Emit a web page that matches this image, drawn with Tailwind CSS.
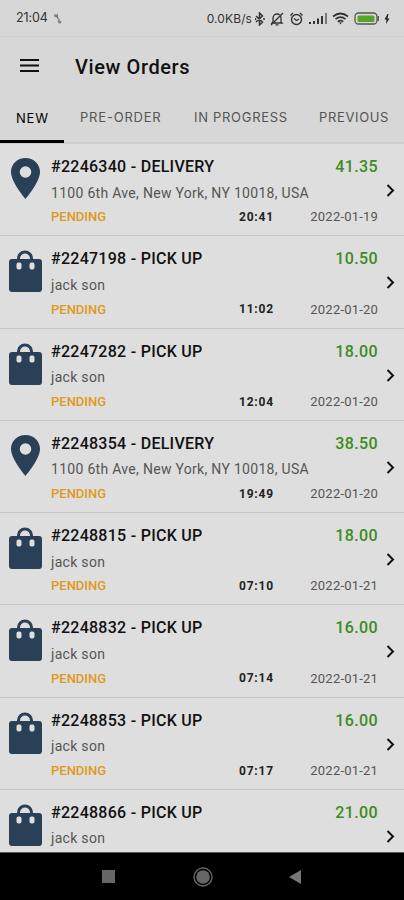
<!DOCTYPE html>
<html lang="en">
<head>
    <meta charset="UTF-8">
    <meta name="viewport" content="width=device-width, initial-scale=1.0">
    <title>View Orders</title>
    <script src="https://cdn.jsdelivr.net/npm/@tailwindcss/browser@4"></script>
</head>
<body class="h-[900px] overflow-hidden bg-[#dedede] flex flex-col font-['Roboto',sans-serif] text-black whitespace-nowrap">
    <!-- Status bar -->
    <div class="h-[37px] shrink-0 bg-[#d7d7d7] border-b border-[#cdcdcd] flex items-center pl-4 pr-[14px] pt-px text-[#333]">
        <span class="text-[12.5px] tracking-[-0.1px] font-['Inter',sans-serif]">21:04</span>
        <svg class="ml-[6px] w-2 h-3" viewBox="0 0 8 12" fill="none" stroke="#777" stroke-width="1.3"><path d="M1 4V2l2 2M3 1l1 5M5 6v4M4 8l2 2 1-2"/></svg>
        <span class="ml-auto text-[12px] tracking-[0.1px] font-['Inter',sans-serif]">0.0KB/s</span>
        <svg class="ml-[3px] w-[10px] h-[14px]" viewBox="0 0 10 14" fill="none" stroke="#333" stroke-width="1.5"><path d="M1 4l6.500 6L4.500 13V1l3 3L1 10M9 6v2M0.500 6v2"/></svg>
        <svg class="ml-[5px] w-[14px] h-[14px]" viewBox="0 0 14 14" fill="none" stroke="#333" stroke-width="1.3"><path d="M3 10V6a4 4 0 0 1 8 0v4l1 1H2zM5.500 12.800h3M13 1L1 13"/></svg>
        <svg class="ml-[5px] w-[15px] h-[14px]" viewBox="0 0 14 14" fill="none" stroke="#333" stroke-width="1.4"><circle cx="7" cy="7.500" r="5"/><path d="M1 3.500L3.500 1M13 3.500L10.500 1M4.500 6.500L7 8.500l2.500-1.500"/></svg>
        <svg class="ml-[5px] w-[19px] h-[13px]" viewBox="0 0 19 13" fill="#333"><path d="M0 10h2v2H0zM4 9h2v3H4zM8 6.500h2V12H8zM12 4h2v8h-2z"/><path d="M16 1h2v11h-2z" fill="#777"/></svg>
        <svg class="ml-[4px] w-[17px] h-[13px]" viewBox="0 0 17 13" fill="none" stroke="#333" stroke-width="1.700"><path d="M1 4.500Q8.500-1.500 16 4.500M3.500 7.200q5-4 10 0M5.800 9.700q2.700-2 5.400 0"/><path d="M7 10.500h3L8.500 12.500z" fill="#333" stroke="none"/></svg>
        <svg class="ml-[5px] w-[26px] h-[13px]" viewBox="0 0 26 13"><rect x="1" y="1" width="22" height="11" rx="3.500" fill="#d7d7d7" stroke="#555" stroke-width="1.300"/><rect x="3.500" y="3.500" width="17" height="6.500" rx="1.500" fill="#55a528"/><path d="M24.200 4v5" stroke="#555" stroke-width="1.500"/></svg>
        <svg class="ml-[4px] w-[6px] h-[10px]" viewBox="0 0 6 10" fill="#222"><path d="M3.500 0L0.500 5.500h2L2 10l3.500-5.500h-2L4.500 0z"/></svg>
    </div>

    <!-- App bar -->
    <div class="h-[57px] shrink-0 bg-[#d7d7d7] flex items-center pl-5">
        <svg class="w-[19px] h-[14px] shrink-0" viewBox="0 0 19 14" fill="#111"><path d="M0 0h19v2H0zM0 5.500h19v2H0zM0 11h19v2H0z"/></svg>
        <h1 class="ml-9 mt-[2px] text-[20px] font-medium tracking-[0.6px] text-[#111]">View Orders</h1>
    </div>

    <!-- Tabs -->
    <div class="h-[50px] shrink-0 bg-[#d7d7d7] border-b-2 border-[#cdcdcd] flex text-[13px] text-[#555] font-['Inter',sans-serif]">
        <div class="w-16 h-[49px] shrink-0 border-b-3 border-black flex items-center pt-[3px] pl-4 text-black"><span class="tracking-[0.8px]">NEW</span></div>
        <div class="pl-4 w-[130px] shrink-0 flex items-center"><span class="tracking-[0.8px]">PRE-ORDER</span></div>
        <div class="w-[125px] shrink-0 flex items-center"><span class="tracking-[0.7px]">IN PROGRESS</span></div>
        <div class="flex items-center"><span class="tracking-[0.65px]">PREVIOUS</span></div>
    </div>

    <!-- Order list -->
    <div id="orders" class="flex-1 min-h-0 overflow-hidden"></div>

    <!-- Navigation bar -->
    <div class="h-[48px] shrink-0 bg-black border-t border-[#555] flex items-center pl-[102px]">
        <div class="w-[13px] h-[13px] bg-[#666]"></div>
        <svg class="ml-[78px] w-5 h-5" viewBox="0 0 20 20" fill="none" stroke="#666"><circle cx="10" cy="10" r="9" stroke-width="1.400"/><circle cx="10" cy="10" r="6.800" fill="#666" stroke="none"/></svg>
        <svg class="ml-[76px] w-3 h-[14px]" viewBox="0 0 12 14" fill="#777"><path d="M12 0v14L0 7z"/></svg>
    </div>

    <script>
        const address = "1100 6th Ave, New York, NY 10018, USA";
        const orders = [
            { id: "2246340", type: "DELIVERY", name: address, total: "41.35", time: "20:41", date: "2022-01-19" },
            { id: "2247198", type: "PICK UP", name: "jack son", total: "10.50", time: "11:02", date: "2022-01-20" },
            { id: "2247282", type: "PICK UP", name: "jack son", total: "18.00", time: "12:04", date: "2022-01-20" },
            { id: "2248354", type: "DELIVERY", name: address, total: "38.50", time: "19:49", date: "2022-01-20" },
            { id: "2248815", type: "PICK UP", name: "jack son", total: "18.00", time: "07:10", date: "2022-01-21" },
            { id: "2248832", type: "PICK UP", name: "jack son", total: "16.00", time: "07:14", date: "2022-01-21" },
            { id: "2248853", type: "PICK UP", name: "jack son", total: "16.00", time: "07:17", date: "2022-01-21" },
            { id: "2248866", type: "PICK UP", name: "jack son", total: "21.00" }
        ];

        const pin = `<svg class="w-[34px] h-[43px] -mt-px" viewBox="0 0 34 43" fill="#2a4056"><path fill-rule="evenodd" d="M17.500 1C9.500 1 3 7 3 15c0 10 14.500 27 14.500 27S32 25 32 15C32 7 25.500 1 17.500 1zM17.500 9.200a5.800 5.800 0 1 1 0 11.600a5.800 5.800 0 0 1 0-11.600z"/></svg>`;
        const bag = `<svg class="w-[34px] h-[43px]" viewBox="0 0 34 43"><path d="M10.500 10V8.500a6.500 6.500 0 0 1 13 0V10" fill="none" stroke="#2a4056" stroke-width="3"/><rect x="1" y="9" width="33" height="33" rx="3" fill="#2a4056"/><rect x="8.500" y="12.500" width="5" height="7" rx="2" fill="#dedede"/><rect x="21.500" y="12.500" width="5" height="7" rx="2" fill="#dedede"/></svg>`;

        document.getElementById("orders").innerHTML = orders.map(o => `
            <div class="h-[92.25px] border-b border-[#c6c6c6] flex">
                <div class="w-[51px] shrink-0 pl-2 pt-[14px]">${o.type === "DELIVERY" ? pin : bag}</div>
                <div class="w-[327px] shrink-0 pt-[11px]">
                    <div class="flex justify-between h-6 items-center text-[16px] font-medium">
                        <span class="text-[#111] tracking-[0.27px]">#${o.id} - ${o.type}</span>
                        <span class="text-[#3c8c20] tracking-[0.4px]">${o.total}</span>
                    </div>
                    <div class="h-[28px] flex items-center text-[14px] text-[#555] tracking-[0.3px]">${o.name}</div>
                    ${o.time ? `<div class="h-[20px] flex items-center">
                        <span class="w-[188px] text-[13px] font-medium text-[#e0981c]">PENDING</span>
                        <span class="text-[12px] font-bold text-[#222] tracking-[0.8px]">${o.time}</span>
                        <span class="ml-auto text-[13px] text-[#555] tracking-[0.2px]">${o.date}</span>
                    </div>` : ""}
                </div>
                <svg class="ml-[8px] mt-[40px] w-[9px] h-[13px]" viewBox="0 0 9 13" fill="none" stroke="#111" stroke-width="2"><path d="M1.500 1L7 6.500L1.500 12"/></svg>
            </div>`).join("");
    </script>
</body>
</html>
